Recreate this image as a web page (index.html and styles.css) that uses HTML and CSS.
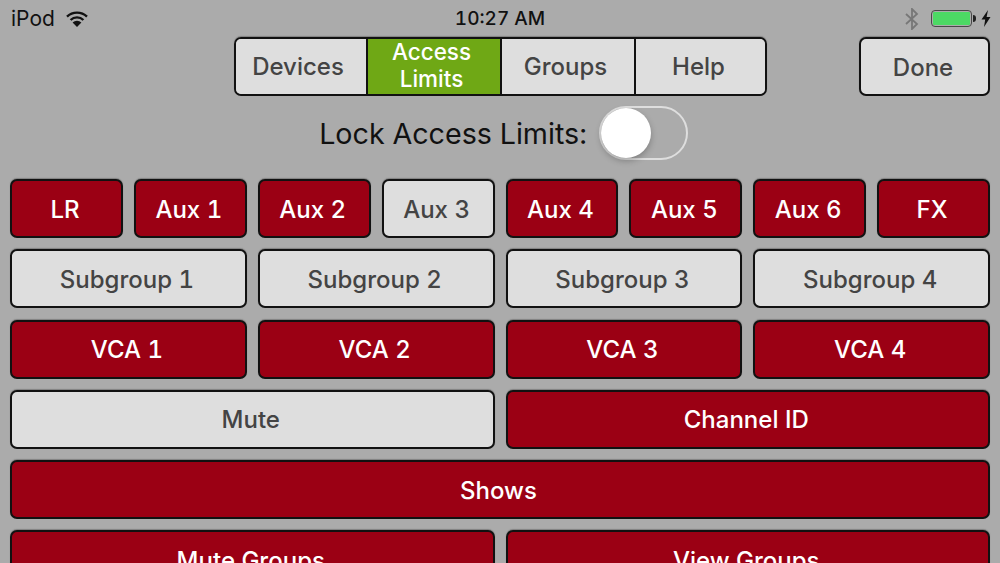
FILE: index.html
```html
<!DOCTYPE html>
<html>

<head>
  <meta charset="utf-8">
  <title>Access Limits</title>
  <link rel="stylesheet" href="styles.css">
</head>

<body>

  <!-- iOS status bar -->
  <div class="status-bar">
    <div class="status-left">
      <span>iPod</span>
      <svg class="wifi" width="22" height="16" viewBox="0 0 22 16">
        <path d="M1 5.6 A14.5 14.5 0 0 1 21 5.6" fill="none" stroke="#111" stroke-width="2.4"/>
        <path d="M4.6 9 A9.2 9.2 0 0 1 17.4 9" fill="none" stroke="#111" stroke-width="2.4"/>
        <path d="M11 16 L6.6 11.5 A6.2 6.2 0 0 1 15.4 11.5 Z" fill="#111"/>
      </svg>
    </div>
    <div class="status-time">10:27 AM</div>
    <div class="status-right">
      <svg class="bluetooth" width="16" height="22" viewBox="0 0 16 22">
        <path d="M2 6 L13 16 L8 21 V1 L13 6 L2 16" fill="none" stroke="#777" stroke-width="1.8"/>
      </svg>
      <div class="battery"><div class="battery-fill"></div></div>
      <div class="battery-tip"></div>
      <svg class="bolt" width="10" height="17" viewBox="0 0 10 17">
        <path d="M7 0 L0.5 9.5 H4.2 L3 17 L9.5 7 H5.6 Z" fill="#111"/>
      </svg>
    </div>
  </div>

  <!-- Tabs and done button -->
  <div class="top-row">
    <div class="tabs">
      <div class="tab">Devices</div>
      <div class="tab tab-active">Access<br>Limits</div>
      <div class="tab">Groups</div>
      <div class="tab">Help</div>
    </div>
    <div class="btn off done">Done</div>
  </div>

  <!-- Lock switch -->
  <div class="lock-row">
    <span>Lock Access Limits:</span>
    <div class="switch"><div class="knob"></div></div>
  </div>

  <!-- Access buttons -->
  <div class="grid">
    <div class="btn on span-2">LR</div>
    <div class="btn on span-2">Aux 1</div>
    <div class="btn on span-2">Aux 2</div>
    <div class="btn off span-2">Aux 3</div>
    <div class="btn on span-2">Aux 4</div>
    <div class="btn on span-2">Aux 5</div>
    <div class="btn on span-2">Aux 6</div>
    <div class="btn on span-2">FX</div>

    <div class="btn off span-4">Subgroup 1</div>
    <div class="btn off span-4">Subgroup 2</div>
    <div class="btn off span-4">Subgroup 3</div>
    <div class="btn off span-4">Subgroup 4</div>

    <div class="btn on span-4">VCA 1</div>
    <div class="btn on span-4">VCA 2</div>
    <div class="btn on span-4">VCA 3</div>
    <div class="btn on span-4">VCA 4</div>

    <div class="btn off span-8">Mute</div>
    <div class="btn on span-8">Channel ID</div>

    <div class="btn on span-16">Shows</div>

    <div class="btn on span-8">Mute Groups</div>
    <div class="btn on span-8">View Groups</div>
  </div>

</body>

</html>
```

FILE: styles.css
```css
html,
body {
  margin: 0;
  padding: 0;
  height: 563px;
  overflow: hidden;
}

body {
  font-family: 'Inter', 'Liberation Sans', sans-serif;
  font-variant-numeric: tabular-nums;
  background-color: #ababab;
  color: #111;
}

/* Status bar */
.status-bar {
  display: grid;
  grid-template-columns: 1fr auto 1fr;
  align-items: center;
  height: 37px;
  padding: 0 9px 0 11px;
  font-size: 21px;
}

.status-left {
  display: flex;
  align-items: center;
  gap: 11px;
}

.status-time {
  padding-right: 2px;
  font-size: 19px;
  font-weight: 500;
}

.status-right {
  display: flex;
  align-items: center;
  justify-content: flex-end;
}

.bluetooth {
  margin-right: 11px;
}

.battery {
  width: 41px;
  height: 17px;
  box-sizing: border-box;
  border: 1.5px solid #484848;
  border-radius: 4px;
  padding: 1px;
}

.battery-fill {
  height: 100%;
  background-color: #4cd964;
  border-radius: 1px;
}

.battery-tip {
  width: 3px;
  height: 7px;
  margin-left: 1px;
  background-color: #222;
  border-radius: 0 3px 3px 0;
}

.bolt {
  margin-left: 5px;
}

/* Tabs */
.top-row {
  display: grid;
  grid-template-columns: 1fr auto 1fr;
  align-items: stretch;
  height: 59px;
  padding: 0 10px;
}

.tabs {
  grid-column: 2;
  display: flex;
  border: 2px solid #111;
  border-radius: 7px;
  overflow: hidden;
  box-shadow: 0 -1px 1px rgba(0, 0, 0, 0.25);
}

.tab {
  box-sizing: border-box;
  width: 134px;
  padding-right: 4px;
  display: flex;
  align-items: center;
  justify-content: center;
  text-align: center;
  font-size: 24px;
  font-weight: 500;
  color: #444;
  background-color: #dedede;
  border-left: 2px solid #111;
}

.tab:first-child {
  width: 130px;
  padding-right: 5px;
  border-left: none;
}

.tab:last-child {
  width: 131px;
  padding-right: 3px;
}

.tab-active {
  padding-bottom: 4px;
  background-color: #6fa815;
  color: white;
  font-size: 22.5px;
  line-height: 27px;
}

.done {
  grid-column: 3;
  justify-self: end;
  width: 131px;
  padding-top: 0;
}

/* Lock row */
.lock-row {
  display: flex;
  align-items: center;
  justify-content: center;
  gap: 12px;
  height: 54px;
  margin-top: 10px;
  padding-left: 7px;
  font-size: 28.7px;
}

.switch {
  width: 89px;
  height: 54px;
  box-sizing: border-box;
  border: 2px solid #dedede;
  border-radius: 27px;
}

.knob {
  width: 50px;
  height: 50px;
  background-color: white;
  border-radius: 50%;
  box-shadow: 0 3px 6px rgba(0, 0, 0, 0.25);
}

/* Access buttons */
.grid {
  display: grid;
  grid-template-columns: repeat(16, 1fr);
  grid-auto-rows: 59px;
  column-gap: 11px;
  row-gap: 11.3px;
  margin-top: 19px;
  padding: 0 10px;
}

.btn {
  box-sizing: border-box;
  display: flex;
  align-items: center;
  justify-content: center;
  padding: 1px 3px 0 0;
  border: 2px solid #111;
  border-radius: 7px;
  font-size: 24px;
  font-weight: 500;
  box-shadow: 0 -1px 1px rgba(0, 0, 0, 0.25);
}

.on {
  background-color: #9b0014;
  color: white;
}

.off {
  background-color: #dedede;
  color: #444;
}

.span-2 {
  grid-column: span 2;
}

.span-4 {
  grid-column: span 4;
}

.span-8 {
  grid-column: span 8;
}

.span-16 {
  grid-column: span 16;
}
```
